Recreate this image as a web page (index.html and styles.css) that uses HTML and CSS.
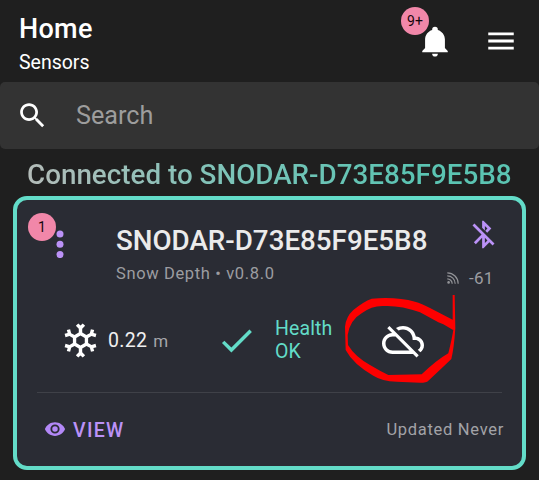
FILE: index.html
```html
<!DOCTYPE html>
<html lang="en">
<head>
<meta charset="utf-8">
<title>Home - Sensors</title>
<link rel="stylesheet" href="styles.css">
</head>
<body>
<header class="topbar">
  <div class="heading">
    <h1>Home</h1>
    <span class="subtitle">Sensors</span>
  </div>
  <div class="bell">
    <svg width="34" height="34" viewBox="0 0 24 24"><path d="M21,19V20H3V19L5,17V11C5,7.9 7.03,5.17 10,4.29C10,4.19 10,4.1 10,4A2,2 0 0,1 12,2A2,2 0 0,1 14,4C14,4.1 14,4.19 14,4.29C16.97,5.17 19,7.9 19,11V17L21,19M14,21A2,2 0 0,1 12,23A2,2 0 0,1 10,21"/></svg>
    <span class="badge badge-bell">9+</span>
  </div>
  <svg class="menu" width="34" height="34" viewBox="0 0 24 24"><path d="M3,6H21V8H3V6M3,11H21V13H3V11M3,16H21V18H3V16Z"/></svg>
</header>
<div class="search">
  <svg width="33" height="33" viewBox="0 0 24 24"><path d="M15.5 14h-.79l-.28-.27C15.41 12.59 16 11.11 16 9.5 16 5.91 13.09 3 9.5 3S3 5.91 3 9.5 5.91 16 9.5 16c1.61 0 3.09-.59 4.23-1.57l.27.28v.79l5 4.99L20.49 19l-4.99-5zm-6 0C7.01 14 5 11.99 5 9.5S7.01 5 9.5 5 14 7.01 14 9.5 11.99 14 9.5 14z"/></svg>
  <span class="placeholder">Search</span>
</div>
<h2 class="connected"><span>Connected to SNODAR-D73E85F9E5B8</span></h2>
<main class="card">
  <div class="card-top">
    <div class="more">
      <svg width="8" height="28" viewBox="0 0 8 28"><circle cx="4" cy="4" r="3.5"/><circle cx="4" cy="14.3" r="3.5"/><circle cx="4" cy="24.6" r="3.5"/></svg>
      <span class="badge badge-card">1</span>
    </div>
    <div class="names">
      <h3>SNODAR-D73E85F9E5B8</h3>
      <p>Snow Depth • v0.8.0</p>
    </div>
    <div class="link">
      <svg class="bluetooth" width="33" height="33" viewBox="0 0 24 24"><path d="M13,5.83L14.88,7.71L13.28,9.31L14.69,10.72L17.71,7.7L12,2H11V7.03L13,9.03M5.41,4L4,5.41L10.59,12L5,17.59L6.41,19L11,14.41V22H12L16.29,17.71L18.59,20L20,18.59M13,18.17V14.41L14.88,16.29"/></svg>
      <div class="signal">
        <svg width="12" height="12" viewBox="0 0 12 12"><circle cx="1.6" cy="10.4" r="1.3"/><path d="M.3 6.8A4.9 4.9 0 0 1 5.2 11.7M.3 3.8A7.9 7.9 0 0 1 8.2 11.7M.3.8A10.9 10.9 0 0 1 11.2 11.7"/></svg>
        <span>-61</span>
      </div>
    </div>
  </div>
  <div class="readings">
    <svg width="41" height="41" viewBox="0 0 24 24"><path d="M20.79,13.95L18.46,14.57L16.46,13.44V10.56L18.46,9.43L20.79,10.05L21.31,8.12L19.54,7.65L20,5.88L18.07,5.36L17.45,7.69L15.45,8.82L13,7.38V5.12L14.71,3.41L13.29,2L12,3.29L10.71,2L9.29,3.41L11,5.12V7.38L8.5,8.82L6.5,7.69L5.92,5.36L4,5.88L4.47,7.65L2.7,8.12L3.22,10.05L5.55,9.43L7.55,10.56V13.45L5.55,14.58L3.22,13.96L2.7,15.89L4.47,16.36L4,18.12L5.93,18.64L6.55,16.31L8.55,15.18L11,16.62V18.88L9.29,20.59L10.71,22L12,20.71L13.29,22L14.7,20.59L13,18.88V16.62L15.5,15.17L17.5,16.3L18.12,18.63L20,18.12L19.53,16.35L21.3,15.88L20.79,13.95M9.5,10.56L12,9.11L14.5,10.56V13.44L12,14.89L9.5,13.44V10.56Z"/></svg>
    <div class="depth">0.22 <small>m</small></div>
    <svg class="check" width="41" height="41" viewBox="0 0 24 24"><path d="M21,7L9,19L3.5,13.5L4.91,12.09L9,16.17L19.59,5.59L21,7Z"/></svg>
    <div class="health">Health<br>OK</div>
    <svg width="42" height="42" viewBox="0 0 24 24"><path d="M19.35 10.04C18.67 6.59 15.64 4 12 4c-1.48 0-2.85.43-4.01 1.17l1.46 1.46C10.21 6.23 11.08 6 12 6c3.04 0 5.5 2.46 5.5 5.5v.5H19c1.66 0 3 1.34 3 3 0 1.13-.64 2.11-1.56 2.62l1.45 1.45C23.16 18.16 24 16.68 24 15c0-2.64-2.05-4.78-4.65-4.96zM3 5.27l2.75 2.74C2.56 8.15 0 10.77 0 14c0 3.31 2.69 6 6 6h11.73l2 2L21 20.73 4.27 4 3 5.27zM7.73 10l8 8H6c-2.21 0-4-1.79-4-4s1.79-4 4-4h1.73z"/></svg>
  </div>
  <footer class="card-foot">
    <div class="view">
      <svg width="22" height="22" viewBox="0 0 24 24"><path d="M12,9A3,3 0 0,0 9,12A3,3 0 0,0 12,15A3,3 0 0,0 15,12A3,3 0 0,0 12,9M12,17A5,5 0 0,1 7,12A5,5 0 0,1 12,7A5,5 0 0,1 17,12A5,5 0 0,1 12,17M12,4.5C7,4.5 2.73,7.61 1,12C2.73,16.39 7,19.5 12,19.5C17,19.5 21.27,16.39 23,12C21.27,7.61 17,4.5 12,4.5Z"/></svg>
      <span>VIEW</span>
    </div>
    <span class="updated">Updated Never</span>
  </footer>
</main>
<svg class="marker" width="140" height="105" viewBox="0 0 420 315"><path fill-rule="evenodd" d="M368,30L374,30L376,130Q372,190 364,222Q330,255 295,287Q290,293 270,293L200,290Q155,288 130,272Q70,238 47,195L45,125Q48,95 70,75Q100,50 125,41Q200,35 255,50Q275,55 300,69L368,104ZM368,134L340,118L325,112L270,82Q210,60 160,63Q125,62 95,85Q60,105 53,150L54,180Q75,215 120,240Q150,258 175,270L275,268Q320,225 355,205Q366,160 370,134Z"/></svg>
</body>
</html>
```
FILE: styles.css
```css
* { box-sizing: border-box; margin: 0; padding: 0; }
body {
  position: relative;
  width: 539px;
  height: 480px;
  overflow: hidden;
  background: #1f1f1f;
  color: #fff;
  font-family: Roboto, "Liberation Sans", sans-serif;
}
svg { display: block; flex: none; fill: #fff; }
h1, h2, h3 { font-weight: 500; white-space: nowrap; }

.topbar { display: flex; height: 82px; padding-left: 19px; }
.heading { width: 399px; padding-top: 13px; }
.heading h1 { font-size: 27px; line-height: 32px; letter-spacing: 0.3px; }
.subtitle { display: block; margin-top: 6px; font-size: 19.5px; line-height: 24px; }
.bell { position: relative; height: 34px; margin-top: 24px; }
.menu { margin: 24px 0 0 32px; }
.badge {
  position: absolute;
  width: 28px;
  height: 28px;
  border-radius: 50%;
  background: #f187a9;
  color: #16060c;
  font-size: 14px;
  line-height: 29px;
  text-align: center;
}
.badge-bell { left: -17px; top: -17px; }

.search {
  display: flex;
  align-items: center;
  height: 67px;
  padding-left: 16px;
  border-radius: 5px;
  background: #333;
}
.placeholder { margin-left: 27px; font-size: 25.2px; color: #9d9d9d; }

.connected { height: 46.5px; padding: 10px 0 0 27px; font-size: 27.8px; line-height: 32px; }
.connected span {
  background: linear-gradient(90deg, #b4bcb9, #78c4b8 45%, #5bc4b2 80%);
  background-clip: text;
  -webkit-background-clip: text;
  color: transparent;
}

.card {
  width: 513px;
  height: 274px;
  margin-left: 13px;
  border: 4px solid #63dcc8;
  border-radius: 14px;
  background: #2a2c34;
}
.card-top { display: flex; height: 102px; }
.more { position: relative; width: 99px; padding: 30px 0 0 39px; }
.more svg { fill: #bb92f7; }
.badge-card { left: 11px; top: 13px; }
.names { width: 320px; padding-top: 25px; white-space: nowrap; }
.names h3 { font-size: 27.75px; line-height: 32px; color: #ebebeb; }
.names p { margin-top: 7px; font-size: 16.5px; line-height: 20px; letter-spacing: 0.64px; color: #9c9da1; }
.link { padding-top: 18px; }
.bluetooth { margin-left: 31px; fill: #bb92f7; }
.signal { display: flex; align-items: center; margin: 17px 0 0 11px; font-size: 17px; line-height: 20px; color: #9c9da1; }
.signal svg { fill: #929397; }
.signal path { fill: none; stroke: #929397; stroke-width: 1.2; }
.signal span { margin-left: 10px; letter-spacing: 0.3px; }

.readings {
  display: grid;
  grid-template-columns: 48px 108px 59px 107px 42px;
  align-items: center;
  height: 91px;
  margin: 0 20px;
  padding: 0 0 13px 23px;
  border-bottom: 1px solid #3f4148;
}
.depth { font-size: 19.5px; letter-spacing: 0.3px; color: #f0f0f0; white-space: nowrap; }
.depth small { margin-left: 1px; font-size: 17px; color: #a5a6aa; }
.check { fill: #63dcc8; }
.health { font-size: 19.5px; line-height: 23px; letter-spacing: 0.1px; color: #63dcc8; }

.card-foot { display: flex; align-items: center; justify-content: space-between; height: 73px; padding: 0 18px 0 27px; }
.view { display: flex; align-items: center; gap: 7px; color: #bb92f7; font-size: 19.5px; font-weight: 500; letter-spacing: 1.3px; }
.view svg { margin-bottom: 1px; fill: #b388f7; }
.view span { padding-top: 2px; }
.updated { padding-top: 1px; font-size: 16.5px; letter-spacing: 0.7px; color: #a2a3a7; }

.marker { position: absolute; left: 330px; top: 285px; fill: #fd0000; }
```
